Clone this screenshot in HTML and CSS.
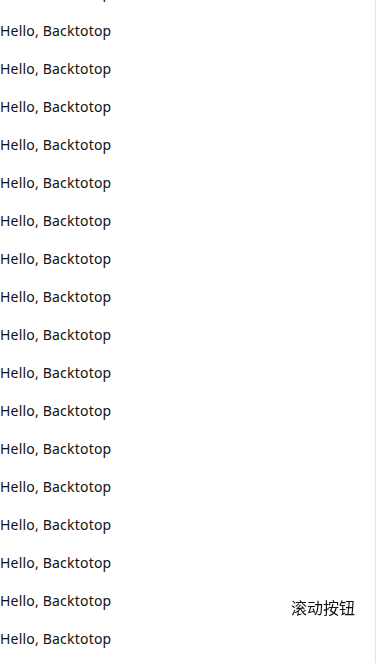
FILE: index.html
```html
<!DOCTYPE html>
<html lang="zh-CN">

<head>
    <meta charset="UTF-8">
    <meta name="viewport" content="width=device-width, initial-scale=1.0">
    <title>Backtotop</title>
    <link rel="stylesheet" href="styles.css">
</head>

<body>

    <div id="page">
        <ul class="list">
            <li>Hello, Backtotop</li>
            <li>Hello, Backtotop</li>
            <li>Hello, Backtotop</li>
            <li>Hello, Backtotop</li>
            <li>Hello, Backtotop</li>
            <li>Hello, Backtotop</li>
            <li>Hello, Backtotop</li>
            <li>Hello, Backtotop</li>
            <li>Hello, Backtotop</li>
            <li>Hello, Backtotop</li>
            <li>Hello, Backtotop</li>
            <li>Hello, Backtotop</li>
            <li>Hello, Backtotop</li>
            <li>Hello, Backtotop</li>
            <li>Hello, Backtotop</li>
            <li>Hello, Backtotop</li>
            <li>Hello, Backtotop</li>
            <li>Hello, Backtotop</li>
        </ul>
    </div>

    <div class="backtop">滚动按钮</div>

</body>

</html>
```

FILE: styles.css
```css
html, body {
    margin: 0px;
    background: #ffffff;
    overflow: hidden;
}

body {
    font-family: "Noto Sans", "Noto Sans CJK SC", sans-serif;
    color: #111111;
}

#page {
    width: 375px;
    height: 663px;
    border-right: 1px solid #e4e4e4;
    overflow: hidden;
}

.list {
    list-style: none;
    margin: -26px 0px 0px 0px;
    padding: 0px;
}

.list li {
    height: 38px;
    line-height: 38px;
    font-size: 14px;
    letter-spacing: 0.2px;
}

.backtop {
    position: fixed;
    right: 21px;
    bottom: 44px;
    font-family: "Noto Sans CJK SC", sans-serif;
    font-size: 16px;
    line-height: 24px;
    color: #111111;
}
```
